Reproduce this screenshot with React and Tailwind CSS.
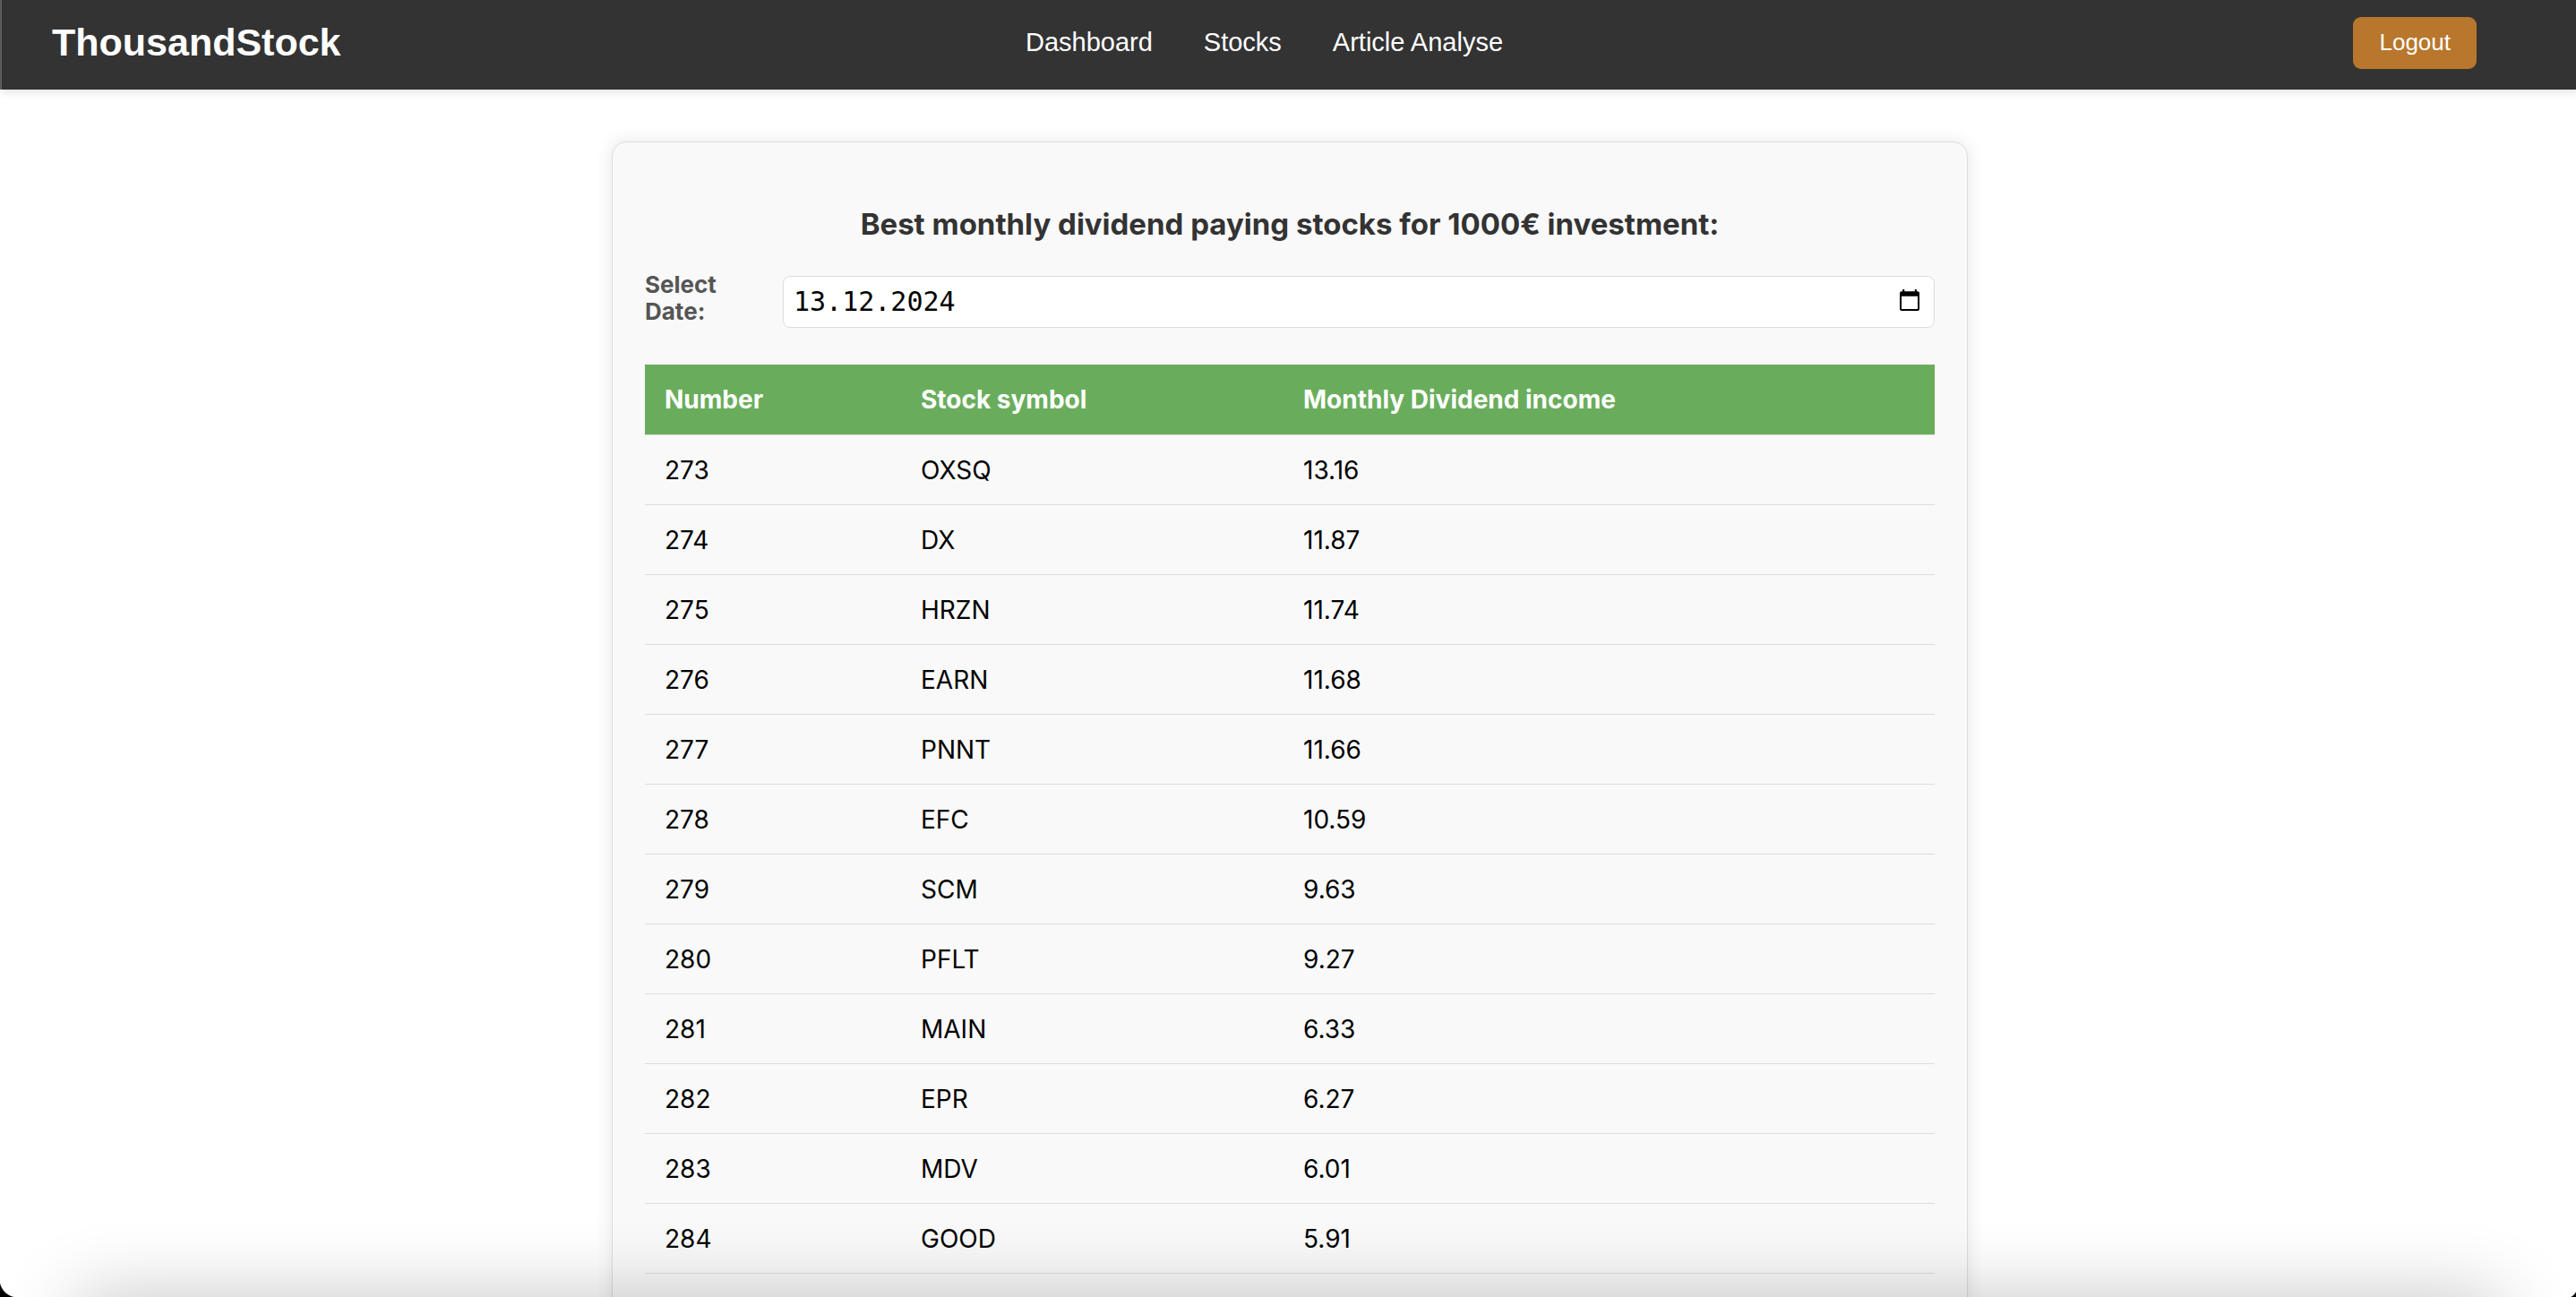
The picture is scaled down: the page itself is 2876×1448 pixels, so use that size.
const rows = [
  [273, "OXSQ", "13.16"],
  [274, "DX", "11.87"],
  [275, "HRZN", "11.74"],
  [276, "EARN", "11.68"],
  [277, "PNNT", "11.66"],
  [278, "EFC", "10.59"],
  [279, "SCM", "9.63"],
  [280, "PFLT", "9.27"],
  [281, "MAIN", "6.33"],
  [282, "EPR", "6.27"],
  [283, "MDV", "6.01"],
  [284, "GOOD", "5.91"],
];

function Header() {
  return (
    <header className="grid grid-cols-[1fr_auto_1fr] items-start border-l-2 border-[#5c5c5c] bg-[#333333] pt-[19px] pr-[111px] pb-[23px] pl-[56px] font-['Liberation_Sans',Arial,sans-serif] text-white shadow-[2px_4px_8px_rgba(0,0,0,0.1)]">
      <div className="text-[43px] leading-[56px] font-bold">ThousandStock</div>
      <nav className="flex gap-[57px] text-[29px] leading-[56px]">
        <a href="#dashboard">Dashboard</a>
        <a href="#stocks">Stocks</a>
        <a href="#article-analyse">Article Analyse</a>
      </nav>
      <button type="button" className="justify-self-end rounded-[9px] bg-[#b8772c] px-[29px] pb-0.5 text-[26px] leading-[56px]">
        Logout
      </button>
    </header>
  );
}

function CalendarIcon() {
  return (
    <svg viewBox="0 0 22 24" className="h-6 w-[22px]" aria-hidden="true">
      <path
        fill="black"
        fillRule="evenodd"
        d="M3.200 0h2v2.200h11.600V0h2v2.200H20a2 2 0 0 1 2 2V22a2 2 0 0 1-2 2H2a2 2 0 0 1-2-2V4.200a2 2 0 0 1 2-2h1.200zM2 7.800V22h18V7.800z"
      />
    </svg>
  );
}

function DateField() {
  return (
    <div className="mt-8 flex items-start">
      <label htmlFor="date" className="w-[154px] shrink-0 pr-16 text-[26px] leading-[30px] font-bold text-[#555555]">
        Select Date:
      </label>
      <div className="mt-[5px] flex h-[58px] flex-1 items-center rounded-lg border border-[#dddddd] bg-white pr-4 pl-[11px]">
        <input
          id="date"
          type="text"
          defaultValue="13.12.2024"
          className="min-w-0 flex-1 bg-transparent pb-0.5 font-['DejaVu_Sans_Mono',monospace] text-[30px] text-black outline-none"
        />
        <button type="button" aria-label="Open calendar" className="pb-1">
          <CalendarIcon />
        </button>
      </div>
    </div>
  );
}

function StockTable() {
  return (
    <table className="mt-[41px] w-full table-fixed border-collapse text-left text-[28px] leading-[30px]">
      <thead>
        <tr className="border-b border-[#dddddd] bg-[#69ad5c] text-white">
          <th className="h-[78px] w-[286px] px-[22px] font-bold">Number</th>
          <th className="w-[427px] px-[22px] font-bold">Stock symbol</th>
          <th className="px-[22px] font-bold">Monthly Dividend income</th>
        </tr>
      </thead>
      <tbody className="text-black">
        {rows.map(([number, symbol, income]) => (
          <tr key={number} className="border-b border-[#dddddd]">
            <td className="h-[78px] px-[22px] pt-0.5">{number}</td>
            <td className="px-[22px] pt-0.5">{symbol}</td>
            <td className="px-[22px] pt-0.5">{income}</td>
          </tr>
        ))}
      </tbody>
    </table>
  );
}

export default function App() {
  return (
    <div className="relative h-screen overflow-hidden bg-white font-[Inter,sans-serif]">
      <Header />
      <main className="pt-[58px] pr-4 pl-[20px]">
        <section className="mx-auto max-w-[1514px] rounded-2xl border border-[#dddddd] bg-[#f9f9f9] px-9 pt-[70px] pb-20 shadow-[0_0_20px_rgba(0,0,0,0.1)]">
          <h1 className="text-center text-[33px] leading-[42px] font-bold text-[#333333]">
            Best monthly dividend paying stocks for 1000€ investment:
          </h1>
          <DateField />
          <StockTable />
        </section>
      </main>
      <div className="pointer-events-none absolute inset-x-[86px] top-full h-24 shadow-[0_0_84px_rgba(0,0,0,0.23)]" />
      <div className="pointer-events-none absolute bottom-0 left-0 h-5 w-5 bg-[radial-gradient(circle_at_100%_0%,transparent_20px,black_21px)]" />
      <div className="pointer-events-none absolute right-0 bottom-0 h-3 w-3 bg-[radial-gradient(circle_at_0%_0%,transparent_13px,black_14px)]" />
    </div>
  );
}
